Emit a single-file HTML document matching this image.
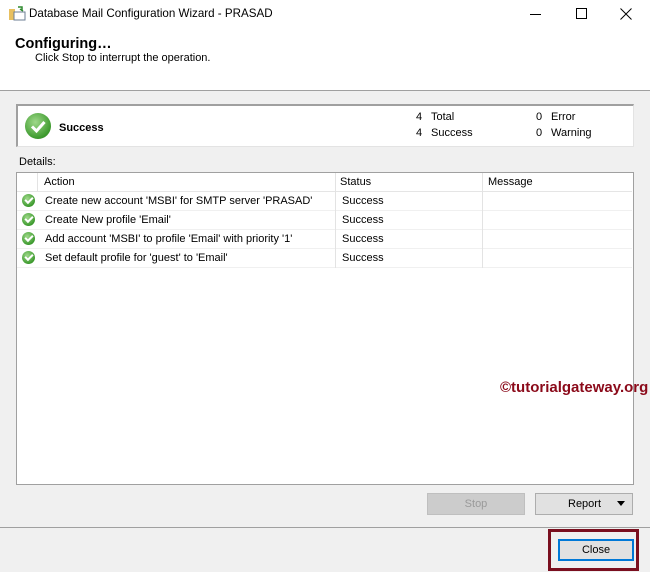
<!DOCTYPE html>
<html><head><style>
*{margin:0;padding:0;box-sizing:border-box}
body{width:650px;height:572px;background:#f0f0f0;font-family:"Liberation Sans",sans-serif;font-size:11px;color:#000;position:relative;overflow:hidden}
.a{position:absolute;white-space:nowrap}
.chk{position:absolute;width:13px;height:13px;border-radius:50%;background:radial-gradient(circle at 40% 35%,#9fd98a,#3d9a2e 70%,#2f7d24)}
.chk:after{content:"";position:absolute;left:3px;top:3px;width:6px;height:3px;border-left:2px solid #fff;border-bottom:2px solid #fff;transform:rotate(-45deg)}
.chk.big:after{display:none}
.hl{position:absolute;left:17px;width:615px;height:1px;background:#f0f0f0}
.vl{position:absolute;top:173px;width:1px;background:#e3e3e3}
</style></head><body>
<div class="a" style="left:0;top:0;width:650px;height:91px;background:#fff;border-bottom:1px solid #a0a0a0"></div>
<svg class="a" style="left:8px;top:6px" width="18" height="16"><rect x="1" y="3" width="6" height="11" fill="#e8c060"/><rect x="6" y="6" width="11" height="8" fill="#fff" stroke="#6b7c93"/><path d="M10 1 L14 1 L14 5 M12 3 L15 5" stroke="#2f8a2f" fill="none" stroke-width="1.5"/></svg>
<div class="a" style="left:29px;top:7px;font-size:11.6px">Database Mail Configuration Wizard - PRASAD</div>
<div class="a" style="left:530px;top:14px;width:11px;height:1px;background:#000"></div>
<div class="a" style="left:576px;top:8px;width:11px;height:11px;border:1px solid #000"></div>
<svg class="a" style="left:620px;top:8px" width="12" height="12"><path d="M0.5 0.5L11.5 11.5M11.5 0.5L0.5 11.5" stroke="#000"/></svg>
<div class="a" style="left:15px;top:36px;font-size:14.5px;font-weight:bold">Configuring…</div>
<div class="a" style="left:35px;top:52px">Click Stop to interrupt the operation.</div>
<div class="a" style="left:16px;top:104px;width:618px;height:43px;background:#fff;border:1px solid #a0a0a0;border-right-color:#e3e3e3;border-bottom-color:#e3e3e3;border-width:2px 1px 1px 2px"></div>
<div class="chk big" style="left:25px;top:113px;width:26px;height:26px"></div>
<svg class="a" style="left:25px;top:113px" width="26" height="26"><path d="M7 13.5L11.5 18L19.5 9" stroke="#fff" stroke-width="3" fill="none"/></svg>
<div class="a" style="left:59px;top:122px;font-weight:bold;font-size:11px">Success</div>
<div class="a" style="left:416px;top:111px">4</div><div class="a" style="left:431px;top:111px">Total</div>
<div class="a" style="left:416px;top:127px">4</div><div class="a" style="left:431px;top:127px">Success</div>
<div class="a" style="left:536px;top:111px">0</div><div class="a" style="left:551px;top:111px">Error</div>
<div class="a" style="left:536px;top:127px">0</div><div class="a" style="left:551px;top:127px">Warning</div>
<div class="a" style="left:19px;top:156px">Details:</div>
<div class="a" style="left:16px;top:172px;width:618px;height:313px;background:#fff;border:1px solid #a0a0a0"></div>
<div class="hl" style="top:191px;background:#e5e5e5"></div>
<div class="hl" style="top:210px"></div><div class="hl" style="top:229px"></div><div class="hl" style="top:248px"></div><div class="hl" style="top:267px"></div>
<div class="vl" style="left:37px;height:18px"></div>
<div class="vl" style="left:335px;height:95px"></div>
<div class="vl" style="left:482px;height:95px"></div>
<div class="a" style="left:44px;top:176px">Action</div>
<div class="a" style="left:340px;top:176px">Status</div>
<div class="a" style="left:488px;top:176px">Message</div>
<div class="chk" style="left:22px;top:194px"></div><div class="a" style="left:45px;top:195px">Create new account 'MSBI' for SMTP server 'PRASAD'</div><div class="a" style="left:342px;top:195px">Success</div>
<div class="chk" style="left:22px;top:213px"></div><div class="a" style="left:45px;top:214px">Create New profile 'Email'</div><div class="a" style="left:342px;top:214px">Success</div>
<div class="chk" style="left:22px;top:232px"></div><div class="a" style="left:45px;top:233px">Add account 'MSBI' to profile 'Email' with priority '1'</div><div class="a" style="left:342px;top:233px">Success</div>
<div class="chk" style="left:22px;top:251px"></div><div class="a" style="left:45px;top:252px">Set default profile for 'guest' to 'Email'</div><div class="a" style="left:342px;top:252px">Success</div>
<div class="a" style="left:500px;top:379px;font-weight:bold;font-size:15px;color:#8b0a1a">©tutorialgateway.org</div>
<div class="a" style="left:427px;top:493px;width:98px;height:22px;background:#cccccc;border:1px solid #bfbfbf;color:#9a9a9a;text-align:center;line-height:20px">Stop</div>
<div class="a" style="left:535px;top:493px;width:98px;height:22px;background:#e1e1e1;border:1px solid #adadad;line-height:20px"><span style="position:absolute;left:32px">Report</span><span style="position:absolute;left:81px;top:7px;width:0;height:0;border-left:4px solid transparent;border-right:4px solid transparent;border-top:5px solid #000"></span></div>
<div class="a" style="left:0;top:527px;width:650px;height:1px;background:#a0a0a0"></div>
<div class="a" style="left:548px;top:529px;width:91px;height:42px;border:3px solid #7a0f1f"></div>
<div class="a" style="left:558px;top:539px;width:76px;height:22px;background:#e1e1e1;border:2px solid #0078d7;text-align:center;line-height:18px">Close</div>
</body></html>
